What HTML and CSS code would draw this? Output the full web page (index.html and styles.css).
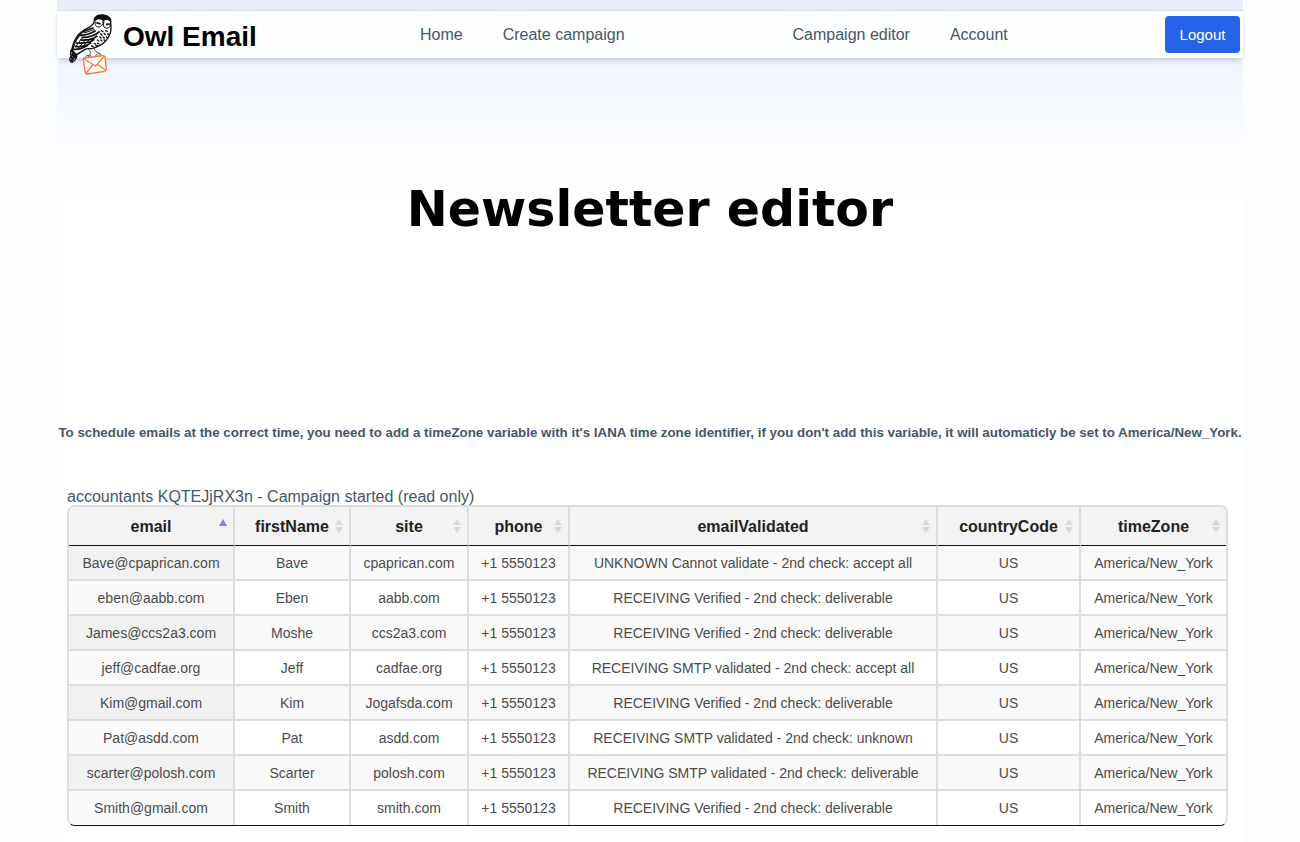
FILE: index.html
```html
<!DOCTYPE html>
<html lang="en">
<head>
<meta charset="utf-8">
<title>Owl Email</title>
<link rel="stylesheet" href="styles.css">
</head>
<body>
<div class="page">
<header class="topbar">
  <a class="brand" href="#">
    <svg class="owl" viewBox="24 18 132 189" aria-hidden="true">
      <path d="M103 40C101 25 116 20 129 21C147 23 155 32 152 46C156 67 149 89 135 101C122 113 109 118 95 122L80 122C65 129 58 136 48 140C54 144 46 159 36 163C27 160 28 149 34 146C30 137 31 129 36 122C41 98 52 78 68 69C80 60 99 57 103 40Z" fill="#fff" stroke="#111" stroke-width="4"/>
      <path d="M103 38C103 24 117 20 129 21C147 22 155 32 152 44C147 34 136 34 130 41C123 32 110 31 105 42Z" fill="#111"/>
      <path d="M106 42C104 53 110 60 121 56L128 48L132 57C140 64 149 61 151 50" fill="none" stroke="#111" stroke-width="3"/>
      <path d="M126 40L130 54L134 41Z" fill="#111"/>
      <path d="M109 44L122 48M138 49L150 48" stroke="#111" stroke-width="5"/>
      <path d="M101 59C83 66 65 70 57 82C73 83 96 74 107 68M57 84C45 98 39 115 37 130M64 89C82 88 103 86 119 70M61 96C76 97 99 94 112 84M48 105C66 106 90 105 103 94M44 115C62 117 82 113 94 104M41 124C58 126 72 119 84 112" fill="none" stroke="#111" stroke-width="5"/>
      <path d="M72 75L104 64M65 91L48 115M78 94L53 123M91 92L66 118M104 89L83 111" fill="none" stroke="#111" stroke-width="3"/>
      <path d="M124 68l5 3M137 68l5 2M122 77l4 4M132 76l4 4M143 77l3 3M119 87l4 3M129 87l4 3M139 87l3 3M112 96l4 3M122 96l4 3M132 95l3 3M103 106l4 3M113 106l4 2M95 114l5 1M108 113l4 -1" fill="none" stroke="#111" stroke-width="4" stroke-linecap="round"/>
      <path d="M34 128L51 143M34 138L48 149M31 147L43 153M32 156L39 158" fill="none" stroke="#111" stroke-width="7"/>
      <path d="M81 121C92 127 94 135 88 141L76 145M88 141L83 150M91 141L94 149M102 119C104 129 111 135 121 137L126 143M112 137L105 146M117 138L117 145" fill="none" stroke="#555" stroke-width="3"/>
      <path d="M73 150L130 143Q134 143 135 147L139 183Q139 188 134 190L82 198Q77 198 76 194L70 156Q69 151 73 150Z" fill="#fff" stroke="#f9742e" stroke-width="4"/>
      <path d="M72 153L107 174L133 145M79 195L99 169M137 187L112 169" fill="none" stroke="#f9742e" stroke-width="4"/>
    </svg>
    <span>Owl Email</span>
  </a>
  <nav class="menu">
    <a href="#">Home</a>
    <a href="#">Create campaign</a>
    <a class="menu-second" href="#">Campaign editor</a>
    <a href="#">Account</a>
  </nav>
  <button class="logout" type="button">Logout</button>
</header>
<main>
  <h1 class="title">Newsletter editor</h1>
  <p class="notice">To schedule emails at the correct time, you need to add a timeZone variable with it's IANA time zone identifier, if you don't add this variable, it will automaticly be set to America/New_York.</p>
  <section class="contacts">
    <p class="caption" id="caption">accountants KQTEJjRX3n - Campaign started (read only)</p>
    <svg class="symbols" aria-hidden="true">
      <symbol id="both" viewBox="0 0 8 14"><path d="M0 6L4 0L8 6ZM0 8L4 14L8 8Z"/></symbol>
      <symbol id="up" viewBox="0 0 8 14"><path d="M0 7L4 0L8 7Z"/></symbol>
    </svg>
    <div class="frame">
    <table class="table" aria-labelledby="caption">
      <colgroup><col class="c-email"><col class="c-name"><col class="c-site"><col class="c-phone"><col class="c-valid"><col class="c-country"><col class="c-zone"></colgroup>
      <thead><tr>
        <th aria-sort="ascending">email<svg class="sort active"><use href="#up"/></svg></th>
        <th>firstName<svg class="sort"><use href="#both"/></svg></th>
        <th>site<svg class="sort"><use href="#both"/></svg></th>
        <th>phone<svg class="sort"><use href="#both"/></svg></th>
        <th>emailValidated<svg class="sort"><use href="#both"/></svg></th>
        <th>countryCode<svg class="sort"><use href="#both"/></svg></th>
        <th>timeZone<svg class="sort"><use href="#both"/></svg></th>
      </tr></thead>
      <tbody>
        <tr><td>Bave@cpaprican.com</td><td>Bave</td><td>cpaprican.com</td><td>+1 5550123</td><td>UNKNOWN Cannot validate - 2nd check: accept all</td><td>US</td><td>America/New_York</td></tr>
        <tr><td>eben@aabb.com</td><td>Eben</td><td>aabb.com</td><td>+1 5550123</td><td>RECEIVING Verified - 2nd check: deliverable</td><td>US</td><td>America/New_York</td></tr>
        <tr><td>James@ccs2a3.com</td><td>Moshe</td><td>ccs2a3.com</td><td>+1 5550123</td><td>RECEIVING Verified - 2nd check: deliverable</td><td>US</td><td>America/New_York</td></tr>
        <tr><td>jeff@cadfae.org</td><td>Jeff</td><td>cadfae.org</td><td>+1 5550123</td><td>RECEIVING SMTP validated - 2nd check: accept all</td><td>US</td><td>America/New_York</td></tr>
        <tr><td>Kim@gmail.com</td><td>Kim</td><td>Jogafsda.com</td><td>+1 5550123</td><td>RECEIVING Verified - 2nd check: deliverable</td><td>US</td><td>America/New_York</td></tr>
        <tr><td>Pat@asdd.com</td><td>Pat</td><td>asdd.com</td><td>+1 5550123</td><td>RECEIVING SMTP validated - 2nd check: unknown</td><td>US</td><td>America/New_York</td></tr>
        <tr><td>scarter@polosh.com</td><td>Scarter</td><td>polosh.com</td><td>+1 5550123</td><td>RECEIVING SMTP validated - 2nd check: deliverable</td><td>US</td><td>America/New_York</td></tr>
        <tr><td>Smith@gmail.com</td><td>Smith</td><td>smith.com</td><td>+1 5550123</td><td>RECEIVING Verified - 2nd check: deliverable</td><td>US</td><td>America/New_York</td></tr>
      </tbody>
    </table>
    </div>
  </section>
</main>
</div>
</body>
</html>
```
FILE: styles.css
```css
* { box-sizing: border-box; }
body {
  margin: 0;
  background: #fcfdff;
  font: 16px/24px "Liberation Sans", Arial, sans-serif;
  color: #475569;
}
.page {
  min-height: 100vh;
  margin: 0 57px;
  padding: 11px 0 16px;
  background: linear-gradient(#e8eefb 0, #f1f6ff 70px, #fcfdff 150px, #fff 200px);
}
.topbar {
  display: flex;
  align-items: center;
  height: 47px;
  padding: 0 3px 0 11px;
  background: #fdfeff;
  box-shadow: 0 -1px 1px rgba(100, 116, 139, 0.15), 0 4px 6px -2px rgba(0, 0, 0, 0.2);
}
.brand {
  display: flex;
  align-items: center;
  gap: 11px;
  width: 352px;
  color: #000;
  font-size: 28px;
  font-weight: bold;
  line-height: 32px;
  text-decoration: none;
}
.owl {
  flex: none;
  width: 44px;
  height: 63px;
  margin: 6px 0 -16px;
}
.brand span { padding-top: 4px; }
.menu {
  display: flex;
  flex: 1;
  gap: 40px;
}
.menu a {
  color: #475569;
  text-decoration: none;
  white-space: nowrap;
}
.menu-second { margin-left: 128px; }
.logout {
  width: 75px;
  height: 37px;
  padding: 0;
  border: 0;
  border-radius: 4px;
  background: #2563eb;
  color: #fff;
  font: 15px "Liberation Sans", Arial, sans-serif;
}
.title {
  margin: 0;
  padding: 122px 0 179px;
  color: #000;
  font: bold 49px/60px "DejaVu Sans", Verdana, sans-serif;
  text-align: center;
}
.notice {
  margin: 0;
  padding: 4px 0;
  font-size: smaller;
  font-weight: bold;
  line-height: 20px;
  text-align: center;
}
.contacts { padding: 38px 15px 0 10px; }
.caption {
  margin: 0;
  line-height: 24px;
}
.symbols { display: none; }
.frame {
  margin-top: -4px;
  overflow: hidden;
  border: 2px solid #ddd;
  border-bottom: 1px solid #111;
  border-radius: 8px;
}
.table {
  width: 100%;
  table-layout: fixed;
  border-collapse: separate;
  border-spacing: 0;
  text-align: center;
}
.c-email { width: 166px; }
.c-name { width: 116px; }
.c-site { width: 118px; }
.c-phone { width: 101px; }
.c-valid { width: 368px; }
.c-country { width: 143px; }
.c-zone { width: 145px; }
th, td {
  padding: 0;
  border-right: 2px solid #ddd;
  white-space: nowrap;
}
th {
  position: relative;
  height: 39px;
  padding-top: 2px;
  border-bottom: 1px solid #111;
  background: #f3f3f3;
  color: #222;
}
td {
  height: 35px;
  border-bottom: 2px solid #ddd;
  background: #fff;
  color: #4b4b4b;
  font-size: 14px;
  line-height: 20px;
}
th:last-child, td:last-child { border-right: 0; }
tbody tr:nth-child(odd) td { background: #f9f9f9; }
tbody tr td:first-child { background: #fafafa; }
tbody tr:nth-child(odd) td:first-child { background: #f1f1f1; }
tbody tr:last-child td {
  height: 34px;
  border-bottom: 0;
}
.sort {
  position: absolute;
  top: 12px;
  right: 6px;
  width: 8px;
  height: 14px;
  fill: #d9d9d9;
}
.active { fill: #7f80df; }
```
